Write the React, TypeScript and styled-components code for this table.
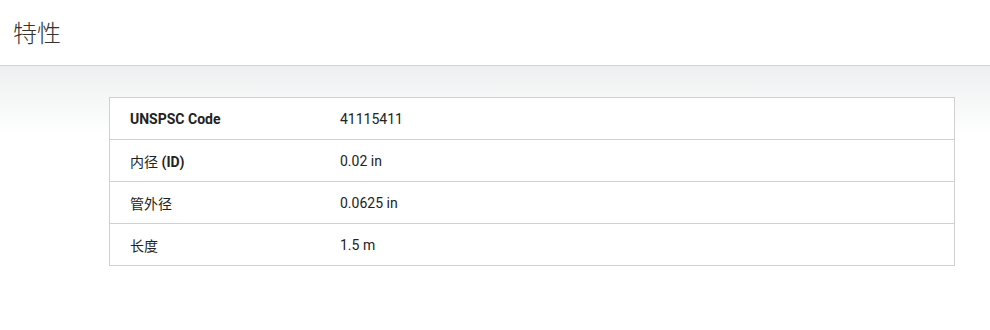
import styled, { createGlobalStyle } from "styled-components";

const GlobalStyle = createGlobalStyle`
  html, body {
    margin: 0;
    padding: 0;
    background: #ffffff;
  }
  body {
    font-family: Roboto, "Noto Sans CJK SC", sans-serif;
    color: #222;
  }
`;

const Header = styled.div`
  height: 66px;
  border-bottom: 1px solid #d2d3d4;
  display: flex;
  align-items: center;
  padding: 0 0 3px 13px;
  box-sizing: border-box;
  h2 {
    margin: 0;
    font-size: 24px;
    font-weight: 300;
    color: #333;
    font-family: "Noto Sans CJK SC", sans-serif;
  }
`;

const Section = styled.div`
  background: linear-gradient(to bottom, #eeeff0 0px, #ffffff 70px);
  padding: 31px 35px 40px 109px;
  min-height: 264px;
  box-sizing: border-box;
`;

const Table = styled.div`
  border: 1px solid #d0d0d0;
  background: #fff;
`;

const Row = styled.div<{ last?: boolean }>`
  display: grid;
  grid-template-columns: 230px 1fr;
  height: 41px;
  align-items: center;
  border-bottom: ${(p) => (p.last ? "none" : "1px solid #d0d0d0")};
  font-size: 14px;
  color: #222;
`;

const Label = styled.div<{ bold?: boolean }>`
  padding-left: 20px;
  font-weight: ${(p) => (p.bold ? 700 : 400)};
  b {
    font-weight: 700;
  }
`;

const Value = styled.div``;

const rows = [
  { label: <>UNSPSC Code</>, value: "41115411", bold: true },
  { label: <>内径 <b>(ID)</b></>, value: "0.02 in" },
  { label: <>管外径</>, value: "0.0625 in" },
  { label: <>长度</>, value: "1.5 m" },
];

const App = (): JSX.Element => {
  return (
    <>
      <GlobalStyle />
      <Header>
        <h2>特性</h2>
      </Header>
      <Section>
        <Table>
          {rows.map((r, i) => (
            <Row key={i} last={i === rows.length - 1}>
              <Label bold={r.bold}>{r.label}</Label>
              <Value>{r.value}</Value>
            </Row>
          ))}
        </Table>
      </Section>
    </>
  );
};

export default App;
